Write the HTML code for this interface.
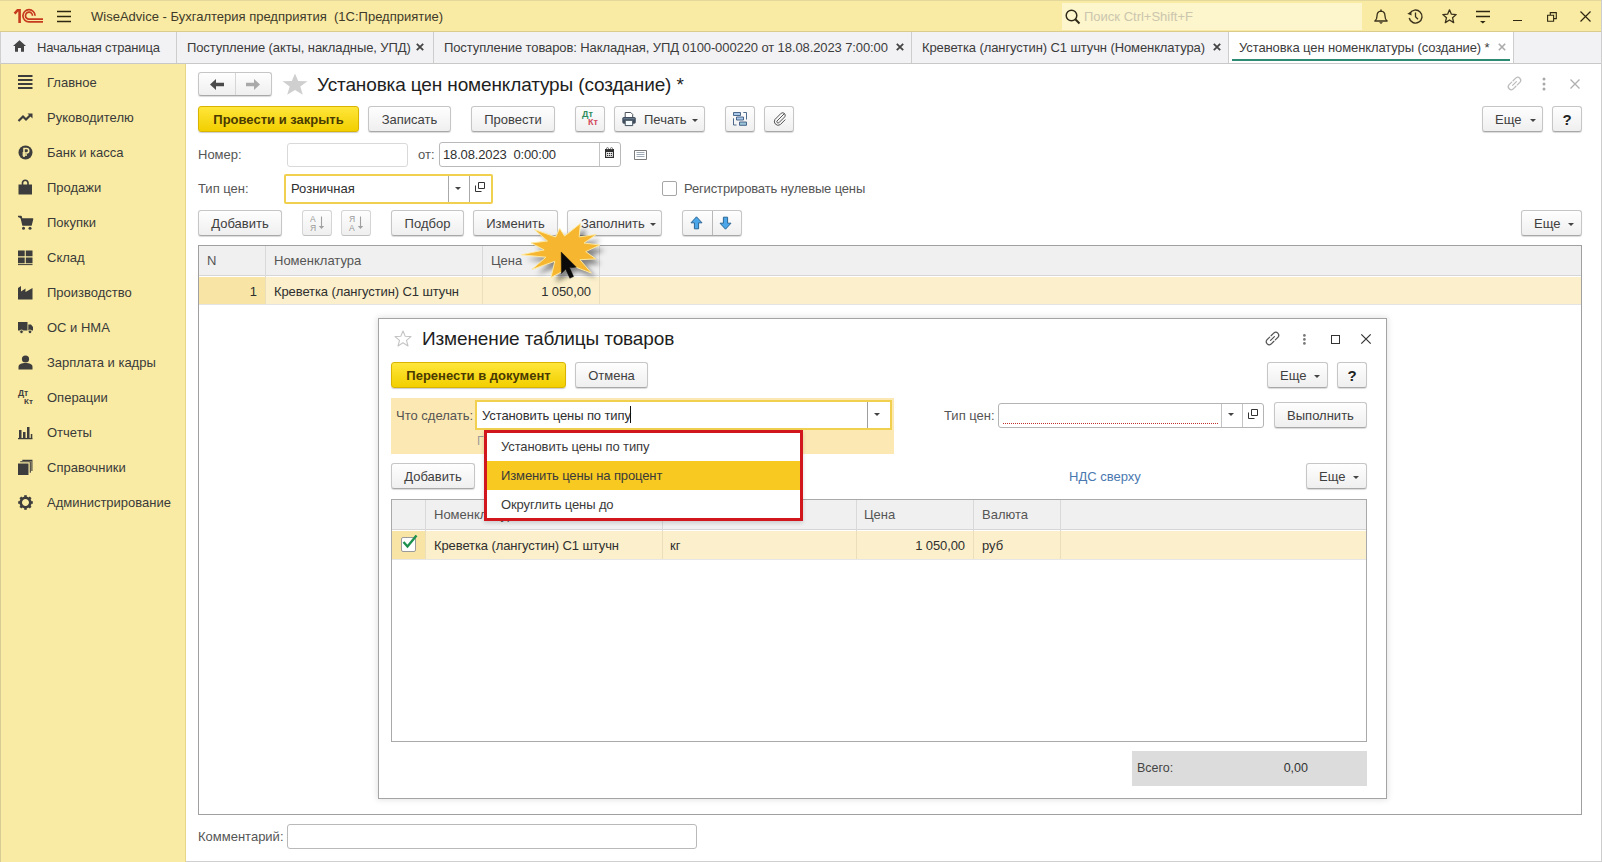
<!DOCTYPE html>
<html><head><meta charset="utf-8">
<style>
*{margin:0;padding:0;box-sizing:border-box}
html,body{width:1602px;height:862px;overflow:hidden;background:#fff}
body{font-family:"Liberation Sans",sans-serif;font-size:13px;color:#333;position:relative}
.a{position:absolute}
.t{position:absolute;white-space:nowrap;line-height:15px}
svg{position:absolute;overflow:visible}
.btn{position:absolute;border:1px solid #c6c6c6;border-bottom-color:#a8a8a8;border-radius:3px;background:linear-gradient(#fefefe,#efefef);box-shadow:0 1px 1px rgba(0,0,0,.15);text-align:center;color:#404040;white-space:nowrap;line-height:25px}
.ybtn{position:absolute;border:1px solid #d8b400;border-radius:3px;background:linear-gradient(#ffe63a,#f2cf00);box-shadow:0 1px 1px rgba(0,0,0,.2);text-align:center;color:#4a3a00;font-weight:bold;white-space:nowrap;line-height:25px}
.inp{position:absolute;border:1px solid #c4c4c4;border-radius:3px;background:#fff}
.si{position:absolute;left:47px;white-space:nowrap;color:#3a3a3a;line-height:15px}
.dd{position:absolute;width:0;height:0;border-left:3px solid transparent;border-right:3px solid transparent;border-top:3px solid #444}
.tab{position:absolute;top:32px;height:31px;border-right:1px solid #cdcdcd}
</style></head><body>

<!-- ===== title bar ===== -->
<div class="a" style="left:0;top:0;width:1602px;height:32px;background:#f9eba3;border-bottom:1px solid #d9cc8c;border-top:1px solid #e3d79c"></div>
<svg style="left:14px;top:9px" width="30" height="15" viewBox="0 0 30 15">
 <g fill="none" stroke="#c63a1e" stroke-width="1.7">
  <path d="M0.6 4.6 L3.6 1.2 L5.6 1.2 L5.6 13.9" stroke-width="2.6"/>
  <path d="M21.1 6.8 A6.1 6.1 0 1 0 15 12.9 L29 12.9"/>
  <path d="M18.5 6.8 A3.5 3.5 0 1 0 15 10.2 L29 10.2"/>
 </g>
</svg>
<svg style="left:57px;top:10px" width="14" height="13">
 <g stroke="#2e2712" stroke-width="1.3"><path d="M0 1.5H14M0 6.5H14M0 11.5H14"/></g>
</svg>
<div class="t" style="left:91px;top:9px;color:#3f3a2a">WiseAdvice - Бухгалтерия предприятия&nbsp; (1С:Предприятие)</div>
<div class="a" style="left:1062px;top:3px;width:300px;height:27px;background:#fdf5cc"></div>
<svg style="left:1065px;top:9px" width="16" height="15">
 <circle cx="6.5" cy="6.5" r="5.3" fill="none" stroke="#2f2a1a" stroke-width="1.5"/>
 <path d="M10.3 10.3 L14.5 14.5" stroke="#2f2a1a" stroke-width="2"/>
</svg>
<div class="t" style="left:1084px;top:9px;color:#cbc6ae">Поиск Ctrl+Shift+F</div>
<!-- bell -->
<svg style="left:1374px;top:9px" width="14" height="15" viewBox="0 0 14 15"><path d="M0.8 12 Q3 10.5 3 7 Q3 2.5 7 2.2 Q11 2.5 11 7 Q11 10.5 13.2 12 Z" fill="none" stroke="#3a321c" stroke-width="1.3" stroke-linejoin="round"/><path d="M7 0.5 V2.2" stroke="#3a321c" stroke-width="1.4"/><path d="M5 13.3 H9 L7 14.9Z" fill="#3a321c"/></svg>
<!-- history -->
<svg style="left:1407px;top:9px" width="16" height="15" viewBox="0 0 16 15">
 <path d="M2.8 4.5 A6.5 6.5 0 1 1 2.2 9" fill="none" stroke="#3a321c" stroke-width="1.4"/>
 <path d="M0.3 4.8 L4.2 2.6 L4.6 6.6Z" fill="#3a321c"/>
 <path d="M8.5 3.5 V7.8 L11 10.3" fill="none" stroke="#3a321c" stroke-width="1.3"/>
</svg>
<!-- star -->
<svg style="left:1442px;top:9px" width="15" height="15" viewBox="0 0 15 15">
 <path d="M7.5 0.8 L9.4 5.2 L14.2 5.6 L10.5 8.7 L11.7 13.6 L7.5 11 L3.3 13.6 L4.5 8.7 L0.8 5.6 L5.6 5.2Z" fill="none" stroke="#3a321c" stroke-width="1.3" stroke-linejoin="round"/>
</svg>
<!-- filter -->
<svg style="left:1476px;top:10px" width="14" height="14" viewBox="0 0 14 14"><path d="M0 1.5H14M0 6.5H14" stroke="#2e2712" stroke-width="1.3"/><path d="M4 11 H9.6 L6.8 13.6Z" fill="#2e2712"/></svg>
<!-- min / restore / close -->
<div class="a" style="left:1513px;top:20px;width:9px;height:1.3px;background:#2e2712"></div>
<svg style="left:1547px;top:12px" width="10" height="10" viewBox="0 0 10 10">
 <path d="M0.6 3.3 H6.6 V9.3 H0.6Z M3.3 3.3 V0.6 H9.3 V6.6 H6.6" fill="none" stroke="#2e2712" stroke-width="1.1"/>
</svg>
<svg style="left:1580px;top:11px" width="11" height="11" viewBox="0 0 11 11">
 <path d="M0.5 0.5 L10.5 10.5 M10.5 0.5 L0.5 10.5" stroke="#2e2712" stroke-width="1.2"/>
</svg>
<div class="a" style="left:1601px;top:0;width:1px;height:862px;background:#cdcdcd"></div>

<!-- ===== tab bar ===== -->
<div class="a" style="left:0;top:32px;width:1601px;height:32px;background:#f2f2f4;border-bottom:1px solid #c8c8c8"></div>
<div class="a" style="left:0;top:32px;width:1px;height:32px;background:#cfcfcf"></div>
<div class="tab" style="left:0;width:177px"></div>
<div class="tab" style="left:177px;width:257px"></div>
<div class="tab" style="left:434px;width:478px"></div>
<div class="tab" style="left:912px;width:317px"></div>
<div class="tab" style="left:1229px;width:285px;background:#fff"></div>
<div class="a" style="left:1232px;top:59px;width:278px;height:2px;background:#2e8a72"></div>
<svg style="left:13px;top:40px" width="13" height="12" viewBox="0 0 13 12">
 <path d="M6.5 0.3 L13 6 L11 6 L11 11.8 L8 11.8 L8 8 L5 8 L5 11.8 L2 11.8 L2 6 L0 6Z" fill="#454545"/>
</svg>
<div class="t" style="left:37px;top:40px;color:#3c3c3c;letter-spacing:-0.17px">Начальная страница</div>
<div class="t" style="left:187px;top:40px;color:#3c3c3c;letter-spacing:-0.1px">Поступление (акты, накладные, УПД)</div>
<div class="t" style="left:444px;top:40px;color:#3c3c3c;letter-spacing:-0.1px">Поступление товаров: Накладная, УПД 0100-000220 от 18.08.2023 7:00:00</div>
<div class="t" style="left:922px;top:40px;color:#3c3c3c;letter-spacing:-0.1px">Креветка (лангустин) С1 штучн (Номенклатура)</div>
<div class="t" style="left:1239px;top:40px;color:#3c3c3c;letter-spacing:-0.1px">Установка цен номенклатуры (создание) *</div>
<svg style="left:416px;top:43px" width="8" height="8"><path d="M0.8 0.8L7.2 7.2M7.2 0.8L0.8 7.2" stroke="#444" stroke-width="1.8"/></svg>
<svg style="left:896px;top:43px" width="8" height="8"><path d="M0.8 0.8L7.2 7.2M7.2 0.8L0.8 7.2" stroke="#444" stroke-width="1.8"/></svg>
<svg style="left:1213px;top:43px" width="8" height="8"><path d="M0.8 0.8L7.2 7.2M7.2 0.8L0.8 7.2" stroke="#444" stroke-width="1.8"/></svg>
<svg style="left:1498px;top:43px" width="8" height="8"><path d="M0.8 0.8L7.2 7.2M7.2 0.8L0.8 7.2" stroke="#aaa" stroke-width="1.6"/></svg>

<!-- ===== sidebar ===== -->
<div class="a" style="left:0;top:64px;width:186px;height:798px;background:#f9eba3;border-right:1px solid #e6d68a;border-left:1px solid #d8cc95"></div>
<div class="si" style="top:75px">Главное</div>
<svg style="left:18px;top:75px" width="15" height="15" viewBox="0 0 15 15"><path d="M0 1H14.5M0 5H14.5M0 9H14.5M0 13H14.5" stroke="#3d3d3d" stroke-width="2"/></svg>
<div class="si" style="top:110px">Руководителю</div>
<svg style="left:18px;top:110px" width="15" height="15" viewBox="0 0 15 15"><path d="M0.5 11 L5 6.5 L8 9.5 L12.5 5" fill="none" stroke="#3d3d3d" stroke-width="2.2"/><path d="M9.5 3.5 H14.5 V8.5Z" fill="#3d3d3d"/></svg>
<div class="si" style="top:145px">Банк и касса</div>
<svg style="left:18px;top:145px" width="15" height="15" viewBox="0 0 15 15"><circle cx="7.5" cy="7.5" r="7" fill="#3d3d3d"/><path d="M6 12 V3.5 H8.5 A2.2 2.2 0 0 1 8.5 8 H4.5 M4.5 10 H9" fill="none" stroke="#f9eba3" stroke-width="1.6"/></svg>
<div class="si" style="top:180px">Продажи</div>
<svg style="left:18px;top:180px" width="15" height="15" viewBox="0 0 15 15"><path d="M0.5 4.5 H14 V14.5 H0.5Z" fill="#3d3d3d"/><path d="M4.5 5 V2.5 A2.8 2.8 0 0 1 10 2.5 V5" fill="none" stroke="#3d3d3d" stroke-width="1.6"/></svg>
<div class="si" style="top:215px">Покупки</div>
<svg style="left:18px;top:215px" width="15" height="15" viewBox="0 0 15 15"><path d="M0 1.5 H3 L5 10 H13 L14.5 4 H3.5" fill="#3d3d3d" stroke="#3d3d3d" stroke-width="1.6" stroke-linejoin="round"/><circle cx="5.5" cy="13.2" r="1.5" fill="#3d3d3d"/><circle cx="12" cy="13.2" r="1.5" fill="#3d3d3d"/></svg>
<div class="si" style="top:250px">Склад</div>
<svg style="left:18px;top:250px" width="15" height="15" viewBox="0 0 15 15"><path d="M0 0.5 H6.7 V6.3 H0Z M7.8 0.5 H14.5 V6.3 H7.8Z M0 7.5 H6.7 V13.3 H0Z M7.8 7.5 H14.5 V13.3 H7.8Z" fill="#3d3d3d"/><path d="M0 14.6 H14.5" stroke="#3d3d3d" stroke-width="1"/></svg>
<div class="si" style="top:285px">Производство</div>
<svg style="left:18px;top:285px" width="15" height="15" viewBox="0 0 15 15"><path d="M0 14.5 V3 L3 1 V6.5 L7.5 3.5 V7 L14.5 3 V14.5Z" fill="#3d3d3d"/></svg>
<div class="si" style="top:320px">ОС и НМА</div>
<svg style="left:18px;top:320px" width="15" height="15" viewBox="0 0 15 15"><path d="M0 2 H9.5 V10.5 H0Z M10.3 4.5 H13 L15 7 V10.5 H10.3Z" fill="#3d3d3d"/><circle cx="3.5" cy="11.8" r="1.8" fill="#3d3d3d" stroke="#f9eba3" stroke-width="0.8"/><circle cx="12" cy="11.8" r="1.8" fill="#3d3d3d" stroke="#f9eba3" stroke-width="0.8"/></svg>
<div class="si" style="top:355px">Зарплата и кадры</div>
<svg style="left:18px;top:355px" width="15" height="15" viewBox="0 0 15 15"><circle cx="7.5" cy="4" r="3.6" fill="#3d3d3d"/><path d="M0.5 14.5 V12 C0.5 9 3.5 8 7.5 8 C11.5 8 14.5 9 14.5 12 V14.5Z" fill="#3d3d3d"/></svg>
<div class="si" style="top:390px">Операции</div>
<div class="a" style="left:18px;top:389px;font-size:8.5px;line-height:8px;font-weight:bold;color:#3d3d3d">Дт</div><div class="a" style="left:24px;top:398px;font-size:8px;line-height:8px;font-weight:bold;color:#3d3d3d">Кт</div>
<div class="si" style="top:425px">Отчеты</div>
<svg style="left:18px;top:425px" width="15" height="15" viewBox="0 0 15 15"><path d="M1 5 H3.5 V13 H1Z M5 7 H7.5 V13 H5Z M9 2 H11.5 V13 H9Z" fill="#3d3d3d"/><path d="M0 13.6 H14.5" stroke="#3d3d3d" stroke-width="1.3"/><path d="M12.8 9 H14.3 V13 H12.8Z" fill="#3d3d3d"/></svg>
<div class="si" style="top:460px">Справочники</div>
<svg style="left:18px;top:460px" width="15" height="15" viewBox="0 0 15 15"><path d="M0 3.5 H10.5 V15 H0Z" fill="#3d3d3d"/><path d="M2.2 1.8 H12.3 V12.8 M4.3 0.4 H13.9 V11" fill="none" stroke="#3d3d3d" stroke-width="1.1"/></svg>
<div class="si" style="top:495px">Администрирование</div>
<svg style="left:18px;top:495px" width="15" height="15" viewBox="0 0 15 15"><g transform="translate(7.5 7.5)"><circle r="4.8" fill="none" stroke="#3d3d3d" stroke-width="2.6"/><rect x="-1.3" y="-7.3" width="2.6" height="3.4" fill="#3d3d3d" transform="rotate(0)"/><rect x="-1.3" y="-7.3" width="2.6" height="3.4" fill="#3d3d3d" transform="rotate(45)"/><rect x="-1.3" y="-7.3" width="2.6" height="3.4" fill="#3d3d3d" transform="rotate(90)"/><rect x="-1.3" y="-7.3" width="2.6" height="3.4" fill="#3d3d3d" transform="rotate(135)"/><rect x="-1.3" y="-7.3" width="2.6" height="3.4" fill="#3d3d3d" transform="rotate(180)"/><rect x="-1.3" y="-7.3" width="2.6" height="3.4" fill="#3d3d3d" transform="rotate(225)"/><rect x="-1.3" y="-7.3" width="2.6" height="3.4" fill="#3d3d3d" transform="rotate(270)"/><rect x="-1.3" y="-7.3" width="2.6" height="3.4" fill="#3d3d3d" transform="rotate(315)"/></g></svg>

<!-- ===== main form ===== -->
<!-- nav group -->
<div class="btn" style="left:198px;top:72px;width:74px;height:24px"></div>
<div class="a" style="left:235px;top:73px;width:1px;height:22px;background:#d6d6d6"></div>
<svg style="left:210px;top:79px" width="14" height="11" viewBox="0 0 14 11"><path d="M0 5.5 L6 0 V3.8 H14 V7.2 H6 V11Z" fill="#4a4a4a"/></svg>
<svg style="left:246px;top:79px" width="14" height="11" viewBox="0 0 14 11"><path d="M14 5.5 L8 0 V3.8 H0 V7.2 H8 V11Z" fill="#a9a9a9"/></svg>
<svg style="left:282px;top:73px" width="26" height="22" viewBox="0 0 26 22"><path d="M13 0.5 L16.2 8 L25.5 8.3 L18.3 13.6 L20.8 21.8 L13 17 L5.2 21.8 L7.7 13.6 L0.5 8.3 L9.8 8Z" fill="#cfcfcf"/></svg>
<div class="t" style="left:317px;top:74px;font-size:19px;line-height:22px;color:#1e1e1e;letter-spacing:-0.13px">Установка цен номенклатуры (создание) *</div>
<!-- top right icons -->
<svg style="left:1507px;top:76px" width="15" height="15" viewBox="0 0 15 15"><g fill="none" stroke="#bdbdbd" stroke-width="1.3" stroke-linecap="round"><path d="M6.1 4.7 L8.9 1.9 A3 3 0 0 1 13.1 6.1 L10.3 8.9"/><path d="M8.9 10.3 L6.1 13.1 A3 3 0 0 1 1.9 8.9 L4.7 6.1"/><path d="M5.6 9.4 L9.4 5.6"/></g></svg>
<svg style="left:1542px;top:77px" width="4" height="14"><circle cx="2" cy="2" r="1.5" fill="#a8a8a8"/><circle cx="2" cy="7" r="1.5" fill="#a8a8a8"/><circle cx="2" cy="12" r="1.5" fill="#a8a8a8"/></svg>
<svg style="left:1570px;top:79px" width="10" height="10"><path d="M0.5 0.5 L9.5 9.5 M9.5 0.5 L0.5 9.5" stroke="#b0b0b0" stroke-width="1.3"/></svg>

<!-- command bar -->
<div class="ybtn" style="left:198px;top:106px;width:161px;height:26px">Провести и закрыть</div>
<div class="btn" style="left:368px;top:106px;width:83px;height:26px">Записать</div>
<div class="btn" style="left:471px;top:106px;width:84px;height:26px">Провести</div>
<div class="btn" style="left:575px;top:106px;width:30px;height:26px"></div>
<div class="a" style="left:582px;top:109px;font-size:9px;line-height:10px;font-weight:bold;color:#2f8c5e">Дт</div>
<div class="a" style="left:588px;top:117px;font-size:9px;line-height:10px;font-weight:bold;color:#d24a5c">Кт</div>
<div class="btn" style="left:614px;top:106px;width:91px;height:26px;text-align:left;padding-left:29px">Печать</div>
<svg style="left:622px;top:112px" width="15" height="14" viewBox="0 0 15 14"><path d="M3.2 0.5 H8.8 L10.7 2.4 V5.5 H3.2Z" fill="#fff" stroke="#4a4f58" stroke-width="1"/><rect x="0.3" y="5" width="13.5" height="6.7" rx="1.6" fill="#3f4d5e"/><path d="M1.5 6.8 H12.6" stroke="#7d8ea3" stroke-width="0.9"/><path d="M3.2 8.3 H10.7 V13.6 H3.2Z" fill="#f3fbff" stroke="#44505c" stroke-width="1"/></svg>
<div class="dd" style="left:692px;top:119px"></div>
<div class="btn" style="left:725px;top:106px;width:30px;height:26px"></div>
<svg style="left:733px;top:112px" width="14" height="14" viewBox="0 0 14 14"><g stroke="#3a5a80" stroke-width="0.9"><path d="M0.5 0.5 H7.5 V3.5 H0.5Z M3.5 5 H10.5 V8 H3.5Z" fill="#a9c8ea"/><path d="M6.5 10 H13.5 V13.3 H6.5Z" fill="#9cc3d8"/><path d="M10.3 0.5 H13.5 V7.5 M0.5 6.3 V13 H3.5" fill="none"/></g></svg>
<div class="btn" style="left:764px;top:106px;width:30px;height:26px"></div>
<svg style="left:773px;top:112px" width="13" height="13" viewBox="0 0 13 13"><path d="M11.5 1.5 L4 9 A1.3 1.3 0 0 0 5.8 10.8 L11.8 4.8 A2.6 2.6 0 0 0 8.2 1.2 L1.9 7.5 A3.8 3.8 0 0 0 7.3 12.6 L12.3 7.6" fill="none" stroke="#555" stroke-width="1"/></svg>
<div class="btn" style="left:1482px;top:106px;width:61px;height:26px;text-align:left;padding-left:12px">Еще</div>
<div class="dd" style="left:1530px;top:119px"></div>
<div class="btn" style="left:1552px;top:106px;width:30px;height:26px;font-weight:bold;font-size:15px;color:#222">?</div>

<!-- номер / дата -->
<div class="t" style="left:198px;top:147px;color:#555">Номер:</div>
<div class="inp" style="left:287px;top:143px;width:121px;height:24px;border-color:#d9d9d9"></div>
<div class="t" style="left:418px;top:147px;color:#555">от:</div>
<div class="inp" style="left:439px;top:142px;width:182px;height:25px;border-color:#b9b9b9"></div>
<div class="a" style="left:599px;top:143px;width:1px;height:23px;background:#c4c4c4"></div>
<div class="t" style="left:443px;top:147px;color:#2f2f2f;letter-spacing:-0.15px">18.08.2023&nbsp; 0:00:00</div>
<svg style="left:605px;top:147px" width="9" height="11" viewBox="0 0 9 11"><path d="M0 2 H9 V11 H0Z" fill="#2f2f2f"/><path d="M1.2 5 H7.8 V9.8 H1.2Z" fill="#fff"/><g fill="#2f2f2f"><rect x="2" y="5.8" width="1.2" height="1.2"/><rect x="3.9" y="5.8" width="1.2" height="1.2"/><rect x="5.8" y="5.8" width="1.2" height="1.2"/><rect x="2" y="7.8" width="1.2" height="1.2"/><rect x="3.9" y="7.8" width="1.2" height="1.2"/><rect x="5.8" y="7.8" width="1.2" height="1.2"/></g><circle cx="2.5" cy="1.6" r="1" fill="#fff" stroke="#2f2f2f" stroke-width=".6"/><circle cx="6.5" cy="1.6" r="1" fill="#fff" stroke="#2f2f2f" stroke-width=".6"/></svg>
<svg style="left:634px;top:150px" width="13" height="10" viewBox="0 0 13 10"><path d="M0.5 0.5 H12.5 V9.5 H0.5Z" fill="none" stroke="#7b7b7b" stroke-width="1"/><path d="M2.5 2.5 H10.5 M2.5 4.5 H10.5 M2.5 6.5 H10.5" fill="none" stroke="#a0aab5" stroke-width="1"/></svg>

<!-- тип цен -->
<div class="t" style="left:198px;top:181px;color:#555">Тип цен:</div>
<div class="a" style="left:284px;top:174px;width:209px;height:30px;border:2px solid #f1d050;border-radius:2px;background:#fff"></div>
<div class="a" style="left:448px;top:176px;width:1px;height:26px;background:#a9a9a9"></div>
<div class="a" style="left:469px;top:176px;width:1px;height:26px;background:#a9a9a9"></div>
<div class="t" style="left:291px;top:181px;color:#2f2f2f">Розничная</div>
<div class="dd" style="left:455px;top:187px"></div>
<svg style="left:475px;top:182px" width="10" height="10" viewBox="0 0 10 10"><path d="M3.5 0.5 H9.5 V6.5 H3.5Z M0.5 3.5 V9.5 H6.5" fill="none" stroke="#333" stroke-width="1"/></svg>
<div class="a" style="left:662px;top:181px;width:15px;height:15px;border:1px solid #a6a6a6;border-radius:2px;background:#fff"></div>
<div class="t" style="left:684px;top:181px;color:#555;letter-spacing:-0.15px">Регистрировать нулевые цены</div>

<!-- table toolbar -->
<div class="btn" style="left:198px;top:210px;width:84px;height:26px">Добавить</div>
<div class="btn" style="left:302px;top:210px;width:30px;height:26px;border-color:#d5d5d5;border-bottom-color:#c0c0c0;box-shadow:none"></div>
<div class="btn" style="left:341px;top:210px;width:30px;height:26px;border-color:#d5d5d5;border-bottom-color:#c0c0c0;box-shadow:none"></div>
<svg style="left:310px;top:214px" width="15" height="18" viewBox="0 0 15 18"><text x="0" y="7.5" font-family="Liberation Sans" font-size="8.5" fill="#999">А</text><text x="0" y="16.5" font-family="Liberation Sans" font-size="8.5" fill="#999">Я</text><path d="M11.5 2.5 V13" stroke="#a0a0a0" stroke-width="1.1"/><path d="M8.8 12 H14.2 L11.5 15Z" fill="#a0a0a0"/></svg>
<svg style="left:349px;top:214px" width="15" height="18" viewBox="0 0 15 18"><text x="0" y="7.5" font-family="Liberation Sans" font-size="8.5" fill="#999">Я</text><text x="0" y="16.5" font-family="Liberation Sans" font-size="8.5" fill="#999">А</text><path d="M11.5 2.5 V13" stroke="#a0a0a0" stroke-width="1.1"/><path d="M8.8 12 H14.2 L11.5 15Z" fill="#a0a0a0"/></svg>
<div class="btn" style="left:391px;top:210px;width:73px;height:26px">Подбор</div>
<div class="btn" style="left:473px;top:210px;width:85px;height:26px">Изменить</div>
<div class="btn" style="left:567px;top:210px;width:95px;height:26px;text-align:left;padding-left:13px">Заполнить</div>
<div class="dd" style="left:650px;top:223px"></div>
<div class="btn" style="left:682px;top:210px;width:60px;height:26px"></div>
<div class="a" style="left:712px;top:211px;width:1px;height:24px;background:#b8b8b8"></div>
<svg style="left:690px;top:216px" width="13" height="14" viewBox="0 0 13 14"><path d="M6.5 0.8 L12 6.8 H8.6 V12.8 H4.4 V6.8 H1Z" fill="#4ba6ea" stroke="#2b6796" stroke-width="1" stroke-linejoin="round"/></svg>
<svg style="left:719px;top:216px" width="13" height="14" viewBox="0 0 13 14"><path d="M6.5 13.2 L12 7.2 H8.6 V1.2 H4.4 V7.2 H1Z" fill="#4ba6ea" stroke="#2b6796" stroke-width="1" stroke-linejoin="round"/></svg>
<div class="btn" style="left:1521px;top:210px;width:61px;height:26px;text-align:left;padding-left:12px">Еще</div>
<div class="dd" style="left:1568px;top:223px"></div>

<!-- table -->
<div class="a" style="left:198px;top:245px;width:1384px;height:570px;border:1px solid #a0a0a0;background:#fff"></div>
<div class="a" style="left:199px;top:246px;width:1382px;height:30px;background:#f0f0f0;border-bottom:1px solid #d6d6d6"></div>
<div class="a" style="left:265px;top:246px;width:1px;height:58px;background:#d9d9d9"></div>
<div class="a" style="left:482px;top:246px;width:1px;height:58px;background:#d9d9d9"></div>
<div class="a" style="left:599px;top:246px;width:1px;height:58px;background:#d9d9d9"></div>
<div class="t" style="left:207px;top:253px;color:#555">N</div>
<div class="t" style="left:274px;top:253px;color:#555">Номенклатура</div>
<div class="t" style="left:491px;top:253px;color:#555">Цена</div>
<div class="a" style="left:199px;top:277px;width:1382px;height:27px;background:#fbf0cb"></div>
<div class="a" style="left:199px;top:277px;width:66px;height:27px;background:#f8e5a5"></div>
<div class="a" style="left:265px;top:277px;width:1px;height:27px;background:#eadfba"></div>
<div class="a" style="left:482px;top:277px;width:1px;height:27px;background:#eadfba"></div>
<div class="a" style="left:599px;top:277px;width:1px;height:27px;background:#eadfba"></div>
<div class="a" style="left:199px;top:304px;width:1382px;height:1px;background:#e4e4e4"></div>
<div class="t" style="left:207px;top:284px;width:50px;text-align:right;color:#2f2f2f">1</div>
<div class="t" style="left:274px;top:284px;color:#2f2f2f;letter-spacing:-0.1px">Креветка (лангустин) С1 штучн</div>
<div class="t" style="left:491px;top:284px;width:100px;text-align:right;color:#2f2f2f;letter-spacing:-0.1px">1 050,00</div>

<!-- comment -->
<div class="t" style="left:198px;top:829px;color:#555">Комментарий:</div>
<div class="inp" style="left:287px;top:824px;width:410px;height:25px;border-color:#b9b9b9"></div>
<div class="a" style="left:186px;top:861px;width:1416px;height:1px;background:#cfcfcf"></div>


<svg style="left:510px;top:215px" width="110" height="80" viewBox="0 0 110 80">
<defs><filter id="sh" x="-30%" y="-30%" width="160%" height="160%"><feGaussianBlur stdDeviation="2.6"/></filter></defs>
<path d="M49.7 13.4 L54.6 21.1 L70.4 8.5 L69.2 21.9 L86.2 19.5 L74.0 28.0 L89.9 30.0 L75.7 36.6 L85.8 43.9 L70.0 44.7 L81.4 58.1 L62.7 51.0 L41.0 62.5 L44.8 46.3 L22.0 54.4 L35.9 42.2 L11.5 39.8 L34.2 34.9 L21.2 28.0 L37.5 26.0 L24.5 14.6 L45.6 22.0Z" fill="rgba(0,0,0,.45)" transform="translate(5 5)" filter="url(#sh)"/>
<path d="M49.7 13.4 L54.6 21.1 L70.4 8.5 L69.2 21.9 L86.2 19.5 L74.0 28.0 L89.9 30.0 L75.7 36.6 L85.8 43.9 L70.0 44.7 L81.4 58.1 L62.7 51.0 L41.0 62.5 L44.8 46.3 L22.0 54.4 L35.9 42.2 L11.5 39.8 L34.2 34.9 L21.2 28.0 L37.5 26.0 L24.5 14.6 L45.6 22.0Z" fill="#f6b630" stroke="#fde9a0" stroke-width="1" stroke-linejoin="miter"/>
<path d="M51.2 37 L51.4 58.6 L55.8 54.4 L59.8 63.3 L63.6 61.6 L59.6 52.8 L66.4 52.2Z" fill="#0a0a0a" stroke="#0a0a0a" stroke-width="0.4" stroke-linejoin="round"/>
</svg>
<!-- ===== modal ===== -->
<div class="a" style="left:378px;top:318px;width:1009px;height:481px;border:1px solid #a4a4a4;background:#fff;box-shadow:0 0 6px 1px rgba(0,0,0,.11)"></div>
<svg style="left:394px;top:330px" width="18" height="17" viewBox="0 0 18 17"><path d="M9 1 L11.2 6.3 L17 6.6 L12.5 10.3 L14 16 L9 12.8 L4 16 L5.5 10.3 L1 6.6 L6.8 6.3Z" fill="none" stroke="#c4c4c4" stroke-width="1.1" stroke-linejoin="round"/></svg>
<div class="t" style="left:422px;top:328px;font-size:19px;line-height:22px;color:#1e1e1e;letter-spacing:-0.13px">Изменение таблицы товаров</div>
<svg style="left:1265px;top:331px" width="15" height="15" viewBox="0 0 15 15"><g fill="none" stroke="#555" stroke-width="1.25" stroke-linecap="round"><path d="M6.1 4.7 L8.9 1.9 A3 3 0 0 1 13.1 6.1 L10.3 8.9"/><path d="M8.9 10.3 L6.1 13.1 A3 3 0 0 1 1.9 8.9 L4.7 6.1"/><path d="M5.6 9.4 L9.4 5.6"/></g></svg>
<svg style="left:1302px;top:333px" width="5" height="12"><circle cx="2.4" cy="2.4" r="1.35" fill="#777"/><circle cx="2.4" cy="6.4" r="1.35" fill="#777"/><circle cx="2.4" cy="10.4" r="1.35" fill="#777"/></svg>
<div class="a" style="left:1331px;top:335px;width:9px;height:9px;border:1.3px solid #333"></div>
<svg style="left:1361px;top:334px" width="10" height="10"><path d="M0.3 0.3 L9.7 9.7 M9.7 0.3 L0.3 9.7" stroke="#333" stroke-width="1.2"/></svg>

<div class="ybtn" style="left:391px;top:362px;width:175px;height:26px">Перенести в документ</div>
<div class="btn" style="left:575px;top:362px;width:73px;height:26px">Отмена</div>
<div class="btn" style="left:1267px;top:362px;width:61px;height:26px;text-align:left;padding-left:12px">Еще</div>
<div class="dd" style="left:1314px;top:375px"></div>
<div class="btn" style="left:1337px;top:362px;width:30px;height:26px;font-weight:bold;font-size:15px;color:#222">?</div>

<!-- yellow panel -->
<div class="a" style="left:391px;top:398px;width:503px;height:56px;background:#fce8b2"></div>
<div class="t" style="left:396px;top:408px;color:#555">Что сделать:</div>
<div class="a" style="left:475px;top:400px;width:417px;height:30px;border:2px solid #f1d050;background:#fff"></div>
<div class="a" style="left:867px;top:402px;width:1px;height:26px;background:#9e9e9e"></div>
<div class="dd" style="left:874px;top:413px"></div>
<div class="t" style="left:482px;top:408px;color:#2f2f2f;letter-spacing:-0.1px">Установить цены по типу</div>
<div class="a" style="left:630px;top:406px;width:1px;height:17px;background:#111"></div>
<div class="t" style="left:477px;top:434px;color:#9a9a9a;font-size:12px">Г</div>

<div class="t" style="left:944px;top:408px;color:#555">Тип цен:</div>
<div class="inp" style="left:998px;top:403px;width:266px;height:25px;border-color:#b4b4b4"></div>
<div class="a" style="left:1221px;top:404px;width:1px;height:23px;background:#c4c4c4"></div>
<div class="a" style="left:1242px;top:404px;width:1px;height:23px;background:#c4c4c4"></div>
<div class="a" style="left:1003px;top:423px;width:215px;height:0;border-top:1px dotted #c0302a"></div>
<div class="dd" style="left:1228px;top:413px"></div>
<svg style="left:1248px;top:409px" width="10" height="10" viewBox="0 0 10 10"><path d="M3.5 0.5 H9.5 V6.5 H3.5Z M0.5 3.5 V9.5 H6.5" fill="none" stroke="#333" stroke-width="1"/></svg>
<div class="btn" style="left:1274px;top:402px;width:93px;height:26px">Выполнить</div>

<div class="btn" style="left:391px;top:463px;width:84px;height:26px">Добавить</div>
<div class="t" style="left:1069px;top:469px;color:#4a78b0">НДС сверху</div>
<div class="btn" style="left:1306px;top:463px;width:61px;height:26px;text-align:left;padding-left:12px">Еще</div>
<div class="dd" style="left:1353px;top:476px"></div>

<!-- modal table -->
<div class="a" style="left:391px;top:499px;width:976px;height:243px;border:1px solid #a9a9a9;background:#fff"></div>
<div class="a" style="left:392px;top:500px;width:974px;height:30px;background:#f0f0f0;border-bottom:1px solid #d6d6d6"></div>
<div class="a" style="left:425px;top:500px;width:1px;height:59px;background:#d9d9d9"></div>
<div class="a" style="left:662px;top:500px;width:1px;height:59px;background:#d9d9d9"></div>
<div class="a" style="left:856px;top:500px;width:1px;height:59px;background:#d9d9d9"></div>
<div class="a" style="left:973px;top:500px;width:1px;height:59px;background:#d9d9d9"></div>
<div class="a" style="left:1060px;top:500px;width:1px;height:59px;background:#d9d9d9"></div>
<div class="t" style="left:434px;top:507px;color:#555">Номенклатура</div>
<div class="t" style="left:864px;top:507px;color:#555">Цена</div>
<div class="t" style="left:982px;top:507px;color:#555">Валюта</div>
<div class="a" style="left:392px;top:531px;width:974px;height:28px;background:#fbf0cb"></div>
<div class="a" style="left:392px;top:531px;width:33px;height:28px;background:#f8e5a5"></div>
<div class="a" style="left:425px;top:531px;width:1px;height:28px;background:#eadfba"></div>
<div class="a" style="left:662px;top:531px;width:1px;height:28px;background:#eadfba"></div>
<div class="a" style="left:856px;top:531px;width:1px;height:28px;background:#eadfba"></div>
<div class="a" style="left:973px;top:531px;width:1px;height:28px;background:#eadfba"></div>
<div class="a" style="left:1060px;top:531px;width:1px;height:28px;background:#eadfba"></div>
<div class="a" style="left:392px;top:559px;width:974px;height:1px;background:#e6e6e6"></div>
<div class="a" style="left:401px;top:537px;width:15px;height:15px;border:1px solid #9a9a9a;border-radius:2px;background:#fff"></div>
<svg style="left:401px;top:534px" width="17" height="16" viewBox="0 0 17 16"><path d="M2.5 8 L6.5 12.5 L15.5 1.5" fill="none" stroke="#1d9050" stroke-width="2.4"/></svg>
<div class="t" style="left:434px;top:538px;color:#2f2f2f;letter-spacing:-0.1px">Креветка (лангустин) С1 штучн</div>
<div class="t" style="left:670px;top:538px;color:#2f2f2f">кг</div>
<div class="t" style="left:865px;top:538px;width:100px;text-align:right;color:#2f2f2f;letter-spacing:-0.1px">1 050,00</div>
<div class="t" style="left:982px;top:538px;color:#2f2f2f">руб</div>

<!-- totals -->
<div class="a" style="left:1132px;top:751px;width:235px;height:35px;background:#dcdcdc"></div>
<div class="t" style="left:1137px;top:761px;color:#444;font-size:12.5px">Всего:</div>
<div class="t" style="left:1208px;top:761px;width:100px;text-align:right;color:#333;font-size:12.5px">0,00</div>

<!-- dropdown list -->
<div class="a" style="left:484px;top:430px;width:319px;height:91px;border:3px solid #d2161e;background:#fff;box-shadow:0 2px 4px rgba(0,0,0,.15)"></div>
<div class="a" style="left:487px;top:461px;width:313px;height:29px;background:#f8c920"></div>
<div class="t" style="left:501px;top:439px;color:#3a3a3a;letter-spacing:-0.12px">Установить цены по типу</div>
<div class="t" style="left:501px;top:468px;color:#3a3a3a;letter-spacing:-0.12px">Изменить цены на процент</div>
<div class="t" style="left:501px;top:497px;color:#3a3a3a;letter-spacing:-0.12px">Округлить цены до</div>


</body></html>
